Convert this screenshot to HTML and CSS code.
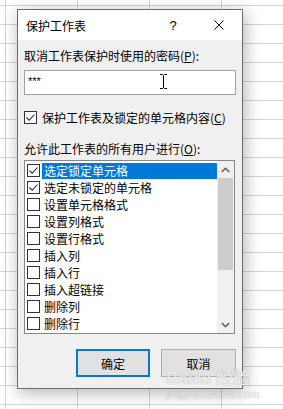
FILE: index.html
```html
<!DOCTYPE html>
<html lang="zh-CN">
<head>
  <meta charset="UTF-8">
  <title>保护工作表</title>
  <link rel="stylesheet" href="styles.css">
</head>
<body>
  <div class="dialog">
    <div class="titlebar">
      <span class="title">保护工作表</span>
      <span class="tb-btn">?</span>
      <span class="tb-btn">
        <svg width="10" height="10" viewBox="0 0 10 10"><path d="M0.5 0.5 L9.5 9.5 M9.5 0.5 L0.5 9.5" stroke="#000" stroke-width="1" fill="none"/></svg>
      </span>
    </div>

    <div class="content">
      <div class="label">取消工作表保护时使用的密码(<u>P</u>):</div>
      <div class="input">
        ***
        <svg class="ibeam" width="7" height="15" viewBox="0 0 7 15"><path d="M0 0.5 H2.5 L3.5 1.5 L4.5 0.5 H7 M3.5 1.5 V13.5 M0 14.5 H2.5 L3.5 13.5 L4.5 14.5 H7" stroke="#000" stroke-width="1" fill="none"/></svg>
      </div>

      <div class="check-row">
        <span class="box"><svg width="11" height="11" viewBox="0 0 11 11"><path d="M1.5 5.5 L4.2 8.3 L9.5 2.5" stroke="#222" stroke-width="1.1" fill="none"/></svg></span>
        <span>保护工作表及锁定的单元格内容(<u>C</u>)</span>
      </div>

      <div class="label label-2">允许此工作表的所有用户进行(<u>O</u>):</div>

      <div class="list">
        <div class="items">
          <div class="item"><span class="box"><svg width="11" height="11" viewBox="0 0 11 11"><path d="M1.5 5.5 L4.2 8.3 L9.5 2.5" stroke="#222" stroke-width="1.1" fill="none"/></svg></span><span class="text selected">选定锁定单元格</span></div>
          <div class="item"><span class="box"><svg width="11" height="11" viewBox="0 0 11 11"><path d="M1.5 5.5 L4.2 8.3 L9.5 2.5" stroke="#222" stroke-width="1.1" fill="none"/></svg></span><span class="text">选定未锁定的单元格</span></div>
          <div class="item"><span class="box"></span><span class="text">设置单元格格式</span></div>
          <div class="item"><span class="box"></span><span class="text">设置列格式</span></div>
          <div class="item"><span class="box"></span><span class="text">设置行格式</span></div>
          <div class="item"><span class="box"></span><span class="text">插入列</span></div>
          <div class="item"><span class="box"></span><span class="text">插入行</span></div>
          <div class="item"><span class="box"></span><span class="text">插入超链接</span></div>
          <div class="item"><span class="box"></span><span class="text">删除列</span></div>
          <div class="item"><span class="box"></span><span class="text">删除行</span></div>
        </div>
        <div class="scrollbar">
          <div class="arrow"><svg width="9" height="6" viewBox="0 0 9 6"><path d="M0.8 5 L4.5 1.3 L8.2 5" stroke="#606060" stroke-width="1.6" fill="none"/></svg></div>
          <div class="thumb"></div>
          <div class="track"></div>
          <div class="arrow"><svg width="9" height="6" viewBox="0 0 9 6"><path d="M0.8 1 L4.5 4.7 L8.2 1" stroke="#606060" stroke-width="1.6" fill="none"/></svg></div>
        </div>
      </div>

      <div class="buttons">
        <button class="btn btn-default">确定</button>
        <button class="btn">取消</button>
      </div>
    </div>
  </div>

  <!-- watermark over the screenshot -->
  <div class="watermark">
    <div class="wm-logo">Bai<span class="paw">du</span> 经验</div>
    <div class="wm-url">jingyan.baidu.com</div>
  </div>
</body>
</html>
```

FILE: styles.css
```css
body {
  margin: 0;
  width: 283px;
  height: 409px;
  overflow: hidden;
  position: relative;
  font-family: "Noto Sans CJK SC", "Microsoft YaHei", sans-serif;
  font-size: 12px;
  color: #000;
  background-color: #fff;
  background-image:
    linear-gradient(to right, #d4d4d4 1px, transparent 1px),
    linear-gradient(to bottom, #d4d4d4 1px, transparent 1px);
  background-size: 72px 19px;
  background-position: 5px 5px;
}
.dialog {
  margin: 9px 0 0 17px;
  width: 224px;
  height: 378px;
  background: #f0f0f0;
  border: 1px solid #6d6d6d;
  box-shadow: 2px 4px 16px rgba(0, 0, 0, 0.3);
}
.titlebar {
  height: 30px;
  background: #fff;
  display: flex;
  align-items: center;
}
.title {
  flex: 1;
  padding-left: 8px;
  font-size: 12px;
}
.tb-btn {
  width: 46px;
  height: 30px;
  display: flex;
  align-items: center;
  justify-content: center;
  font-family: "Liberation Sans", Arial, sans-serif;
  font-size: 13px;
}
.content {
  padding: 0 6px 0 6px;
}
.label {
  margin-top: 8px;
  line-height: 16px;
  white-space: nowrap;
}
.label-2 {
  margin-top: 16px;
}
.input {
  position: relative;
  margin-top: 6px;
  height: 23px;
  border: 1px solid #a0a0a0;
  background: #fff;
  padding-left: 3px;
  line-height: 21px;
  font-family: "Liberation Sans", Arial, sans-serif;
  font-size: 11px;
}
.ibeam {
  position: absolute;
  left: 135px;
  top: 3px;
}
.check-row {
  margin-top: 14px;
  display: flex;
  align-items: center;
  height: 16px;
  white-space: nowrap;
}
.check-row .box {
  margin-right: 5px;
}
.box {
  width: 11px;
  height: 11px;
  border: 1px solid #333;
  background: #fff;
  flex: none;
  display: flex;
}
.list {
  margin-top: 3px;
  height: 172px;
  width: 209px;
  border: 1px solid #828790;
  background: #fff;
  display: flex;
}
.items {
  flex: 1;
  padding: 1px 0 0 2px;
}
.item {
  display: flex;
  align-items: center;
  height: 17px;
  white-space: nowrap;
}
.item .box {
  margin-right: 2px;
}
.text {
  flex: 1;
  height: 16px;
  line-height: 16px;
  padding-left: 2px;
}
.text.selected {
  background: #0078d7;
  color: #fff;
}
.scrollbar {
  width: 17px;
  background: #f0f0f0;
  display: flex;
  flex-direction: column;
}
.arrow {
  height: 17px;
  display: flex;
  align-items: center;
  justify-content: center;
}
.thumb {
  height: 92px;
  margin: 0 1px;
  background: #cdcdcd;
}
.track {
  flex: 1;
}
.buttons {
  margin-top: 15px;
  display: flex;
  justify-content: flex-end;
  gap: 11px;
}
.btn {
  width: 75px;
  height: 28px;
  background: #e1e1e1;
  border: 1px solid #adadad;
  font-family: "Noto Sans CJK SC", "Microsoft YaHei", sans-serif;
  font-size: 12px;
  color: #000;
  padding: 0;
}
.btn-default {
  width: 74px;
  border: 2px solid #0078d7;
}
.watermark {
  position: absolute;
  left: 166px;
  top: 370px;
  color: rgba(255, 255, 255, 0.8);
  text-shadow: 0 0 1px rgba(0, 0, 0, 0.35);
  font-family: "Liberation Sans", Arial, sans-serif;
  white-space: nowrap;
}
.wm-logo {
  font-size: 17px;
  font-weight: bold;
  line-height: 18px;
}
.wm-logo .paw {
  font-size: 15px;
}
.wm-url {
  font-size: 11px;
  line-height: 12px;
  letter-spacing: 0.3px;
}
```
